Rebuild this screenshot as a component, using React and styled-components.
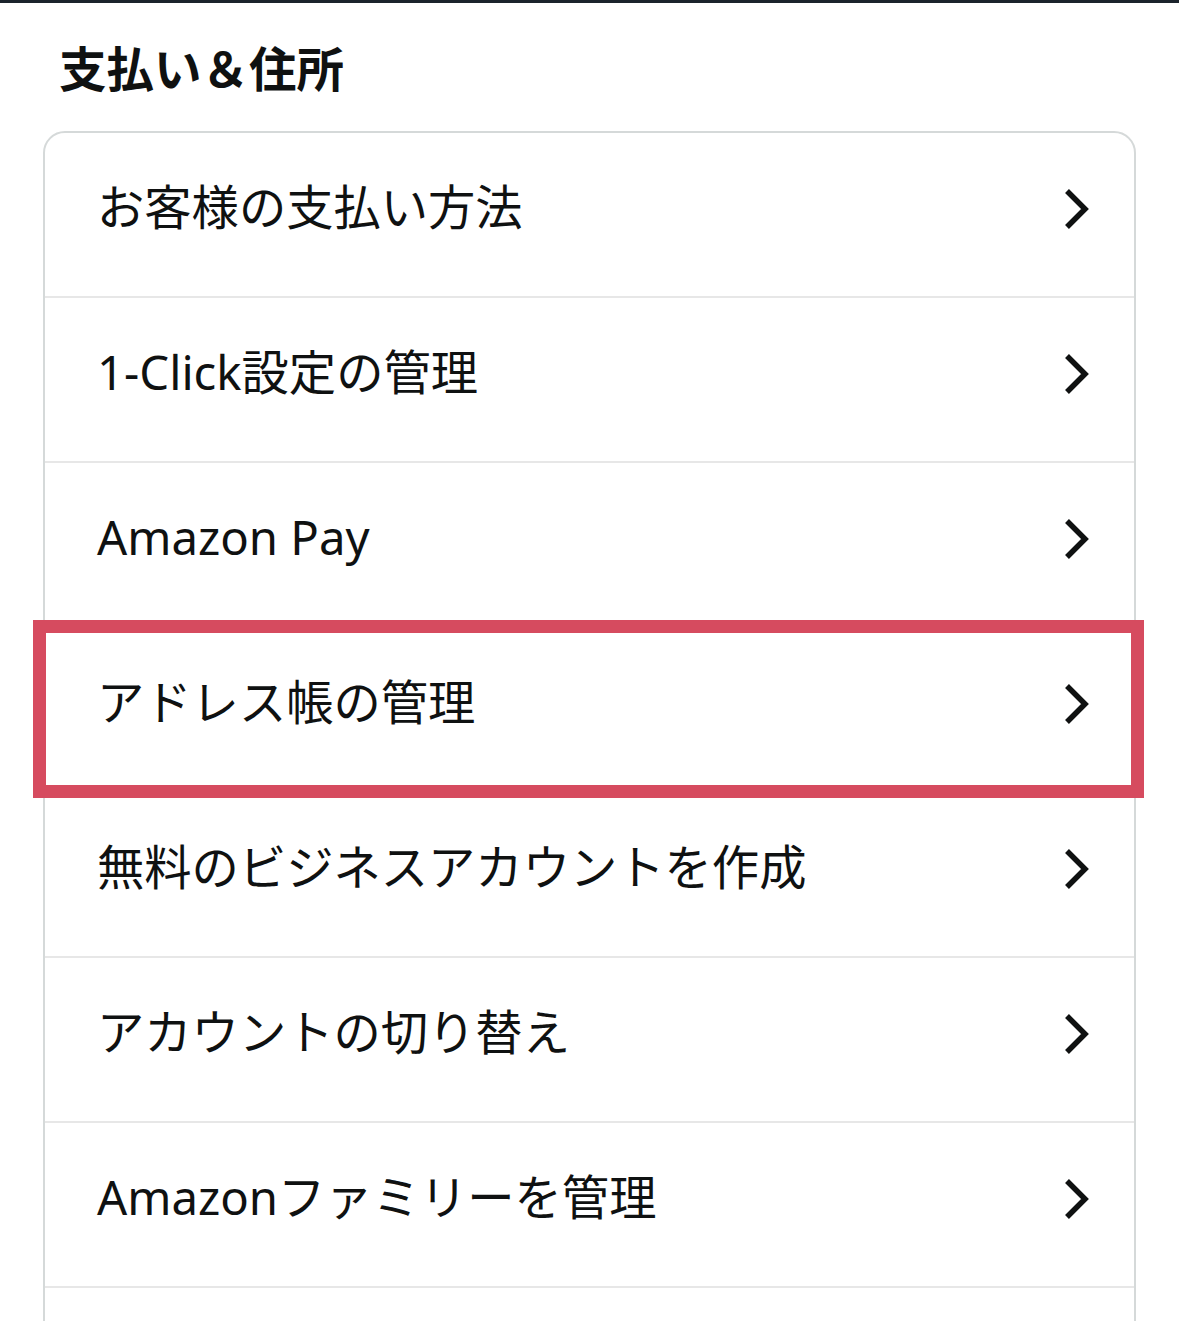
import React from "react";
import styled, { createGlobalStyle } from "styled-components";

const GlobalStyle = createGlobalStyle`
  *, *::before, *::after {
    box-sizing: border-box;
  }
  html, body {
    margin: 0;
    padding: 0;
    background: #ffffff;
  }
  body {
    font-family: "Noto Sans", "Noto Sans CJK JP", sans-serif;
    color: #0f1111;
  }
`;

const items = [
  { label: "お客様の支払い方法" },
  { label: "1-Click設定の管理" },
  { label: "Amazon Pay" },
  { label: "アドレス帳の管理", highlighted: true },
  { label: "無料のビジネスアカウントを作成" },
  { label: "アカウントの切り替え" },
  { label: "Amazonファミリーを管理" },
];

const Chevron = () => (
  <svg width="25" height="42" viewBox="0 0 25 42" fill="none">
    <path
      d="M3 3 L21 21 L3 39"
      stroke="#0f1111"
      strokeWidth="5.5"
      strokeLinejoin="miter"
      strokeLinecap="butt"
    />
  </svg>
);

const App = () => {
  return (
    <>
      <GlobalStyle />
      <Page>
        <TopBar />
        <Heading>支払い＆住所</Heading>
        <Card>
          {items.map((item, i) => (
            <Row key={item.label} first={i === 0}>
              <Label>{item.label}</Label>
              <Arrow>
                <Chevron />
              </Arrow>
              {item.highlighted && <Highlight />}
            </Row>
          ))}
          {/* next item starts just below the fold */}
          <Row />
        </Card>
      </Page>
    </>
  );
};

export default App;

const Page = styled.div`
  width: 1179px;
  min-height: 1321px;
  display: flex;
  flex-direction: column;
`;

const TopBar = styled.div`
  height: 3px;
  background: #1b232c;
`;

const Heading = styled.h2`
  margin: 0;
  padding: 32px 0 0 59px;
  font-size: 47.5px;
  font-weight: 700;
  line-height: 68px;
  color: #0f1111;
`;

const Card = styled.div`
  margin: 28px 43px 0;
  border: 2px solid #d5d9d9;
  border-radius: 22px;
  display: flex;
  flex-direction: column;
`;

const Row = styled.div`
  position: relative;
  height: ${({ first }) => (first ? "163px" : "165px")};
  flex-shrink: 0;
  border-top: ${({ first }) => (first ? "none" : "2px solid #e7e7e7")};
  display: flex;
  align-items: center;
  justify-content: space-between;
  padding: 0 45px 16px 52px;
`;

const Label = styled.span`
  font-size: 47.3px;
  font-weight: 400;
  line-height: 68px;
  color: #0f1111;
  white-space: nowrap;
`;

const Arrow = styled.span`
  display: flex;
  margin-top: 5px;
`;

const Highlight = styled.div`
  position: absolute;
  top: -8px;
  bottom: -7px;
  left: -12px;
  right: -10px;
  border: 13px solid #d64b5f;
  z-index: 1;
  pointer-events: none;
`;
